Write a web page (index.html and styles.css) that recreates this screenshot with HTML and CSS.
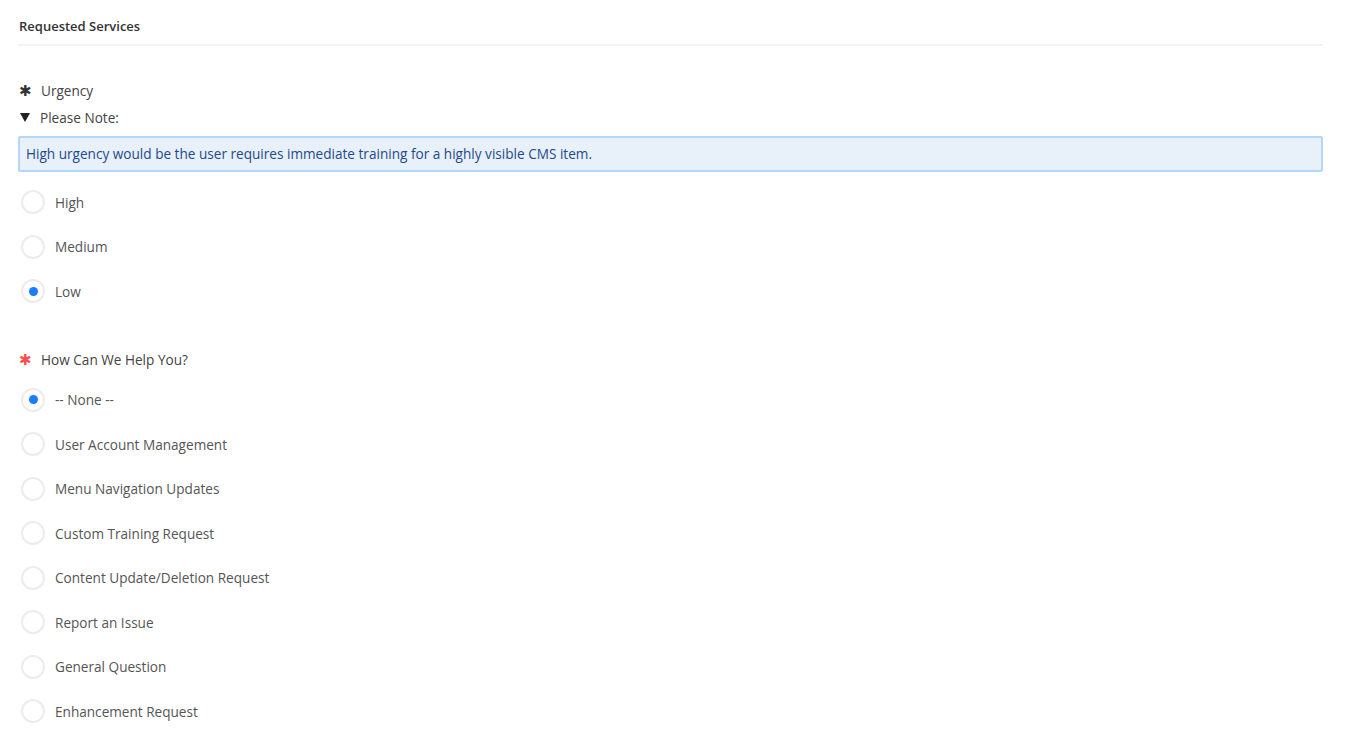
FILE: index.html
```html
<!DOCTYPE html>
<html lang="en">
<head>
    <meta charset="UTF-8">
    <meta name="viewport" content="width=device-width, initial-scale=1.0">
    <title>Requested Services</title>
    <link rel="stylesheet" href="styles.css">
</head>
<body>
    <div class="container">
        <div class="section-header">Requested Services</div>

        <div class="field">
            <div class="field-label">
                <span class="mark mark-filled">&#10033;</span>
                <span>Urgency</span>
            </div>
            <div class="field-note">
                <span class="caret"></span>
                <span>Please Note:</span>
            </div>
            <div class="note-box">High urgency would be the user requires immediate training for a highly visible CMS item.</div>

            <div class="options">
                <label class="option"><span class="radio"></span>High</label>
                <label class="option"><span class="radio"></span>Medium</label>
                <label class="option"><span class="radio checked"></span>Low</label>
            </div>
        </div>

        <div class="field field-help">
            <div class="field-label">
                <span class="mark mark-required">&#10033;</span>
                <span>How Can We Help You?</span>
            </div>

            <div class="options">
                <label class="option"><span class="radio checked"></span>-- None --</label>
                <label class="option"><span class="radio"></span>User Account Management</label>
                <label class="option"><span class="radio"></span>Menu Navigation Updates</label>
                <label class="option"><span class="radio"></span>Custom Training Request</label>
                <label class="option"><span class="radio"></span>Content Update/Deletion Request</label>
                <label class="option"><span class="radio"></span>Report an Issue</label>
                <label class="option"><span class="radio"></span>General Question</label>
                <label class="option"><span class="radio"></span>Enhancement Request</label>
            </div>
        </div>
    </div>
</body>
</html>
```

FILE: styles.css
```css
body {
    font-family: "Open Sans", Lato, sans-serif;
    margin: 0;
    background: white;
    color: #444;
    font-size: 13.6px;
}
.container {
    padding: 0 27px 0 18px;
}
.section-header {
    font-size: 13px;
    font-weight: 600;
    color: #333;
    padding: 17px 0 9px 1px;
    border-bottom: 2px solid #f2f4f4;
}
.field {
    margin-top: 31px;
}
.field-label,
.field-note {
    display: flex;
    align-items: center;
    gap: 8px;
    height: 27px;
}
.mark {
    width: 15px;
    text-align: center;
    font-size: 15px;
    line-height: 1;
}
.mark-filled {
    color: #333;
}
.mark-required {
    color: #ff4d4d;
}
.caret {
    width: 0;
    height: 0;
    margin: 0 2px 0 2px;
    border-left: 5px solid transparent;
    border-right: 5px solid transparent;
    border-top: 9px solid #222;
}
.note-box {
    background: #e8f0fa;
    border: 2px solid #b3d6fc;
    border-radius: 2px;
    color: #1f4a8a;
    padding: 8px 6px;
    margin-top: 5px;
    line-height: 16px;
}
.options {
    display: flex;
    flex-direction: column;
    margin-top: 8px;
}
.option {
    display: flex;
    align-items: center;
    gap: 10px;
    height: 44.5px;
    color: #555;
    cursor: pointer;
}
.radio {
    box-sizing: border-box;
    width: 24px;
    height: 24px;
    margin-left: 3px;
    border: 2px solid #ececec;
    border-radius: 50%;
    display: flex;
    align-items: center;
    justify-content: center;
}
.radio.checked::after {
    content: "";
    width: 9px;
    height: 9px;
    border-radius: 50%;
    background: #1a7cff;
}
.field-help {
    margin-top: 32px;
}
.field-help .options {
    margin-top: 5px;
}
```
